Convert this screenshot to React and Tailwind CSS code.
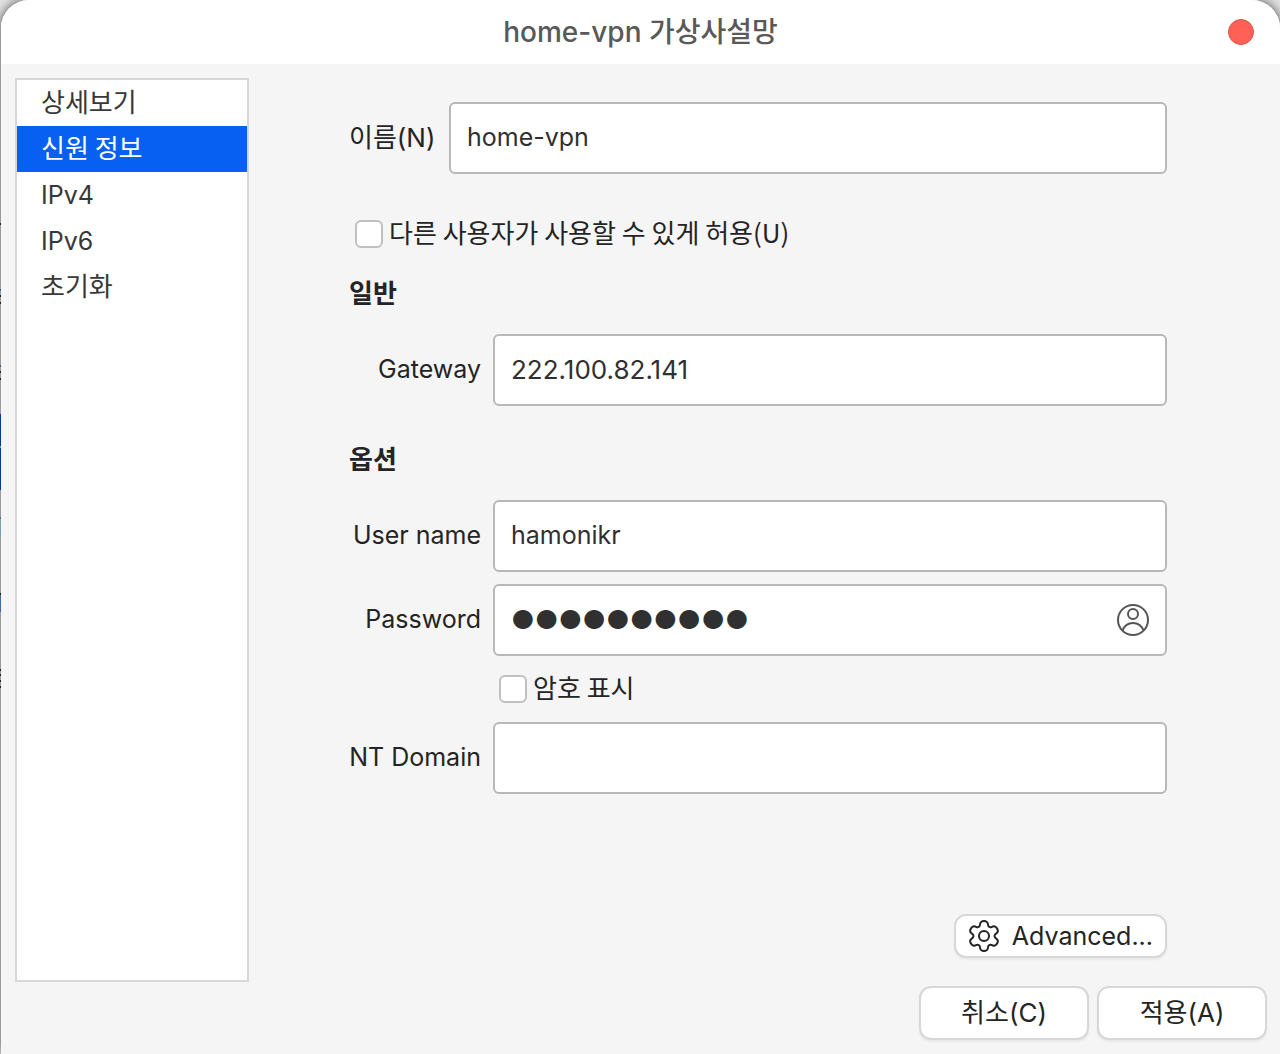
import { useState } from 'react';

const tabs = [
  { label: '상세보기', korean: true },
  { label: '신원 정보', korean: true },
  { label: 'IPv4', korean: false },
  { label: 'IPv6', korean: false },
  { label: '초기화', korean: true },
];

// Slivers of the desktop that show along the left edge of the window
const desktopMarks = [
  { top: 223, height: 2, color: '#222222' },
  { top: 289, height: 2, color: '#3a5f9a' },
  { top: 295, height: 2, color: '#222222' },
  { top: 302, height: 2, color: '#222222' },
  { top: 365, height: 2, color: '#3a5f9a' },
  { top: 371, height: 2, color: '#222222' },
  { top: 378, height: 2, color: '#222222' },
  { top: 414, height: 32, color: '#003a9b' },
  { top: 448, height: 42, color: '#003a9b' },
  { top: 517, height: 2, color: '#3f74ad' },
  { top: 522, height: 14, color: '#75a0a5' },
  { top: 593, height: 2, color: '#222222' },
  { top: 595, height: 17, color: '#3f6a9d' },
  { top: 669, height: 2, color: '#222222' },
  { top: 674, height: 2, color: '#222222' },
  { top: 680, height: 2, color: '#222222' },
  { top: 686, height: 2, color: '#222222' },
];

const koreanText = "font-['Noto_Sans_CJK_KR',sans-serif] text-[26px] leading-9 pb-1";
const inputClass =
  'h-[72px] w-full min-w-0 rounded-md border-2 border-[#b8b8b8] bg-white px-4 pb-0.5 text-[#303030] outline-none focus:border-[#0860f2]';
const checkboxClass =
  'size-7 shrink-0 appearance-none rounded-md border-2 border-[#c0c0c0] bg-white checked:border-[#0860f2] checked:bg-[#0860f2]';
const buttonClass =
  'rounded-xl border-2 border-[#d7d7d7] bg-white shadow-[0_2px_2px_rgba(0,0,0,0.05)]';

function UserIcon() {
  return (
    <svg className="size-8" viewBox="0 0 32 32" fill="none" stroke="currentColor" strokeWidth="2">
      <circle cx="16" cy="16" r="15" />
      <circle cx="16" cy="10" r="5" />
      <path d="M5.500 26.500C7.500 21.500 11.200 19 16 19s8.500 2.500 10.500 7.500" />
    </svg>
  );
}

function GearIcon() {
  return (
    <svg className="size-8" viewBox="0 0 32 32" fill="none" stroke="currentColor" strokeWidth="2" strokeLinejoin="round">
      <circle cx="16" cy="16" r="5" />
      <path d="M12 4.500C12 2.500 13.800 1 16 1s4 1.500 4 3.500c0 2.300 2 3.400 4 2.300 1.800-1 4-.2 5.100 1.700s.7 4.100-1.100 5.200c-2 1.200-2 3.400 0 4.600 1.800 1.100 2.200 3.300 1.100 5.200s-3.300 2.700-5.100 1.700c-2-1.100-4 0-4 2.300 0 2-1.800 3.500-4 3.500s-4-1.500-4-3.500c0-2.300-2-3.400-4-2.300-1.800 1-4 .2-5.100-1.700s-.7-4.100 1.100-5.200c2-1.200 2-3.400 0-4.600C2.200 12.600 1.800 10.400 2.900 8.500s3.300-2.700 5.100-1.700c2 1.100 4 0 4-2.300Z" />
    </svg>
  );
}

function Field({ id, label, children }) {
  return (
    <div className="grid grid-cols-[132px_minmax(0,1fr)] items-center gap-x-3">
      <label htmlFor={id} className="pb-0.5 text-right whitespace-nowrap">
        {label}
      </label>
      {children}
    </div>
  );
}

function App() {
  const [activeTab, setActiveTab] = useState('신원 정보');
  const [name, setName] = useState('home-vpn');
  const [gateway, setGateway] = useState('222.100.82.141');
  const [userName, setUserName] = useState('hamonikr');
  const [domain, setDomain] = useState('');

  return (
    <div className="relative min-h-screen bg-[#e4e4e4] pl-px font-[Inter,'Noto_Sans_CJK_KR',sans-serif] text-[25px] leading-10 text-[#242424]">
      <div className="flex min-h-screen flex-col rounded-t-[28px] bg-[#f5f5f5] shadow-[0_0_12px_rgba(0,0,0,0.7)]">
        {/* Title bar */}
        <header className="grid h-16 grid-cols-[1fr_auto_1fr] items-center rounded-t-[28px] bg-white px-[26px]">
          <h1 className="col-start-2 text-[28px] font-medium text-[#595959]">home-vpn 가상사설망</h1>
          <button
            type="button"
            aria-label="닫기"
            className="size-[26px] justify-self-end rounded-full border border-[#d9534a] bg-[#ff6157]"
          />
        </header>

        <div className="flex flex-1 gap-[100px] pt-3.5 pr-[113px] pl-3.5">
          {/* Sidebar */}
          <nav className="w-[234px] shrink-0 border-2 border-[#d7d7d7] bg-white text-[#383838]">
            {tabs.map((tab) => (
              <button
                key={tab.label}
                type="button"
                onClick={() => setActiveTab(tab.label)}
                className={`block h-[46px] w-full px-6 text-left ${tab.korean ? koreanText : ''} ${
                  tab.label === activeTab ? 'bg-[#0860f2] text-white' : ''
                }`}
              >
                {tab.label}
              </button>
            ))}
          </nav>

          <form className="flex min-w-0 flex-1 flex-col py-6">
            <div className="grid grid-cols-[88px_minmax(0,1fr)] items-center gap-x-3">
              <label htmlFor="name" className="text-[26px] whitespace-nowrap">이름(N)</label>
              <input id="name" className={inputClass} value={name} onChange={(e) => setName(e.target.value)} />
            </div>

            <label className="mt-10 flex h-10 items-center gap-1.5 pl-1.5">
              <input type="checkbox" className={checkboxClass} />
              <span className={koreanText}>다른 사용자가 사용할 수 있게 허용(U)</span>
            </label>

            <h2 className={`${koreanText} my-5 font-bold`}>일반</h2>
            <Field id="gateway" label="Gateway">
              <input
                id="gateway"
                className={`${inputClass} text-[26px]`}
                value={gateway}
                onChange={(e) => setGateway(e.target.value)}
              />
            </Field>

            <h2 className={`${koreanText} mt-[34px] mb-5 font-bold`}>옵션</h2>
            <div className="flex flex-col gap-3">
              <Field id="user" label="User name">
                <input id="user" className={inputClass} value={userName} onChange={(e) => setUserName(e.target.value)} />
              </Field>
              <Field id="password" label="Password">
                <div className="relative">
                  <input id="password" className={`${inputClass} text-[26px]`} defaultValue="●●●●●●●●●●" />
                  <button
                    type="button"
                    aria-label="암호 저장 방식"
                    className="absolute inset-y-0 right-[18px] text-[#555555]"
                  >
                    <UserIcon />
                  </button>
                </div>
              </Field>
              <label className="ml-36 flex h-[42px] items-center gap-1.5 pl-1.5">
                <input type="checkbox" className={checkboxClass} />
                <span className={koreanText}>암호 표시</span>
              </label>
              <Field id="domain" label="NT Domain">
                <input id="domain" className={inputClass} value={domain} onChange={(e) => setDomain(e.target.value)} />
              </Field>
            </div>

            <button type="button" className={`${buttonClass} mt-auto flex h-11 items-center gap-3 self-end px-3`}>
              <GearIcon />
              Advanced...
            </button>
          </form>
        </div>

        <footer className="flex justify-end gap-2 pt-1 pr-[13px] pb-3.5 text-[26px]">
          <button type="button" className={`${buttonClass} h-[54px] w-[170px]`}>취소(C)</button>
          <button type="button" className={`${buttonClass} h-[54px] w-[170px]`}>적용(A)</button>
        </footer>
      </div>

      {desktopMarks.map((mark) => (
        <span
          key={mark.top}
          className="absolute left-0 w-px"
          style={{ top: mark.top, height: mark.height, backgroundColor: mark.color }}
        />
      ))}
    </div>
  );
}

export default App;
